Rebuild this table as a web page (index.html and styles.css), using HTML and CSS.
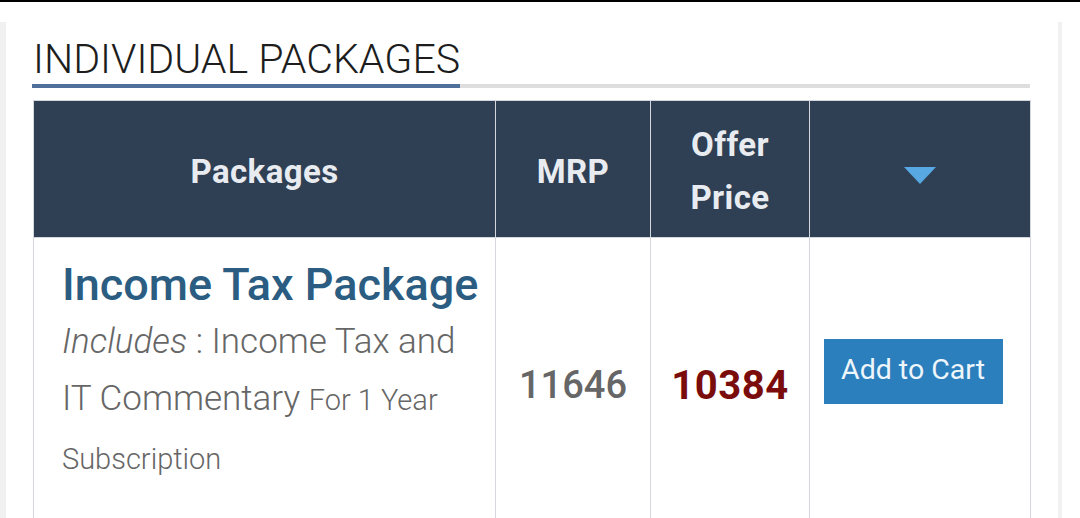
FILE: index.html
```html
<!DOCTYPE html>
<html>
<head>
<meta charset="utf-8">
<link rel="stylesheet" href="styles.css">
</head>
<body>
<div class="topbar"></div>
<div class="frame">
  <div class="heading-wrap">
    <h2 class="heading">INDIVIDUAL PACKAGES</h2>
  </div>
  <table class="pkg-table">
    <colgroup>
      <col class="c1"><col class="c2"><col class="c3"><col class="c4">
    </colgroup>
    <thead>
      <tr>
        <th>Packages</th>
        <th>MRP</th>
        <th>Offer<br>Price</th>
        <th><span class="caret"></span></th>
      </tr>
    </thead>
    <tbody>
      <tr>
        <td class="pkg">
          <div class="pkg-title">Income Tax Package</div>
          <div class="pkg-desc"><em>Includes</em> : Income Tax and IT Commentary <span class="small">For 1 Year Subscription</span></div>
        </td>
        <td class="mrp">11646</td>
        <td class="offer">10384</td>
        <td class="action"><button class="cart-btn">Add to Cart</button></td>
      </tr>
    </tbody>
  </table>
</div>
</body>
</html>
```

FILE: styles.css
```css
html, body {
  margin: 0;
  padding: 0;
  background: #ffffff;
  height: 518px;
  overflow: hidden;
}
body {
  font-family: Roboto, "Open Sans", sans-serif;
}
.topbar {
  height: 2px;
  background: #000;
  margin-bottom: 20px;
}
.frame {
  width: 997px;
  border-left: 6px solid #f1f1f1;
  border-right: 4px solid #f1f1f1;
  padding: 0 28px 0 27px;
  height: 496px;
  overflow: hidden;
}
.heading-wrap {
  border-bottom: 4px solid #dedede;
  padding-top: 14px;
}
.heading {
  display: inline-block;
  margin: 0 0 -4px -1px;
  padding: 0 0 2px 1px;
  font-family: Roboto, sans-serif;
  font-weight: 300;
  font-size: 41.1px;
  line-height: 46px;
  letter-spacing: 0;
  color: #1d1d1d;
  border-bottom: 4px solid #50709c;
}
.pkg-table {
  margin-top: 12px;
  width: 997px;
  border-collapse: collapse;
  table-layout: fixed;
}
.c1 { width: 462px; }
.c2 { width: 155px; }
.c3 { width: 159px; }
.c4 { width: 221px; }
.pkg-table th,
.pkg-table td {
  border: 1.5px solid #d4d8dc;
  text-align: center;
  vertical-align: middle;
}
.pkg-table th {
  background: #2f3f54;
  color: #e8ecf1;
  font-weight: 700;
  font-size: 33px;
  line-height: 53px;
  height: 132px;
  padding: 4px 0 0 0;
  letter-spacing: 0.4px;
}
.caret {
  display: inline-block;
  width: 0;
  height: 0;
  border-left: 16px solid transparent;
  border-right: 16px solid transparent;
  border-top: 17px solid #58a8e4;
  vertical-align: middle;
  margin-top: 4px;
}
.pkg-table td {
  height: 268px;
  padding: 0;
}
.pkg-table td.pkg {
  text-align: left;
  padding: 0 24px 32px 28px;
}
.pkg-title {
  font-size: 45px;
  font-weight: 500;
  color: #2b5d82;
  line-height: 56px;
  letter-spacing: 0;
  white-space: nowrap;
}
.pkg-desc {
  font-size: 35px;
  font-weight: 300;
  color: #666;
  line-height: 57px;
  letter-spacing: 0;
}
.pkg-desc em {
  font-style: italic;
}
.pkg-desc .small {
  font-size: 29px;
}
.pkg-table td.mrp {
  font-size: 38px;
  font-weight: 500;
  color: #666;
  padding-bottom: 6px;
}
.pkg-table td.offer {
  font-size: 40px;
  font-weight: 700;
  color: #7b0c0c;
  letter-spacing: 0.6px;
  padding-bottom: 6px;
}
.pkg-table td.action {
  padding-bottom: 32px;
}
.cart-btn {
  width: 179px;
  height: 65px;
  background: #2b7fbd;
  border: none;
  border-radius: 0;
  color: #eef6fb;
  font-family: Roboto, sans-serif;
  font-size: 28.5px;
  font-weight: 400;
  padding: 0 0 4px 0;
  margin-left: -14px;
  margin-bottom: 1px;
}
```
